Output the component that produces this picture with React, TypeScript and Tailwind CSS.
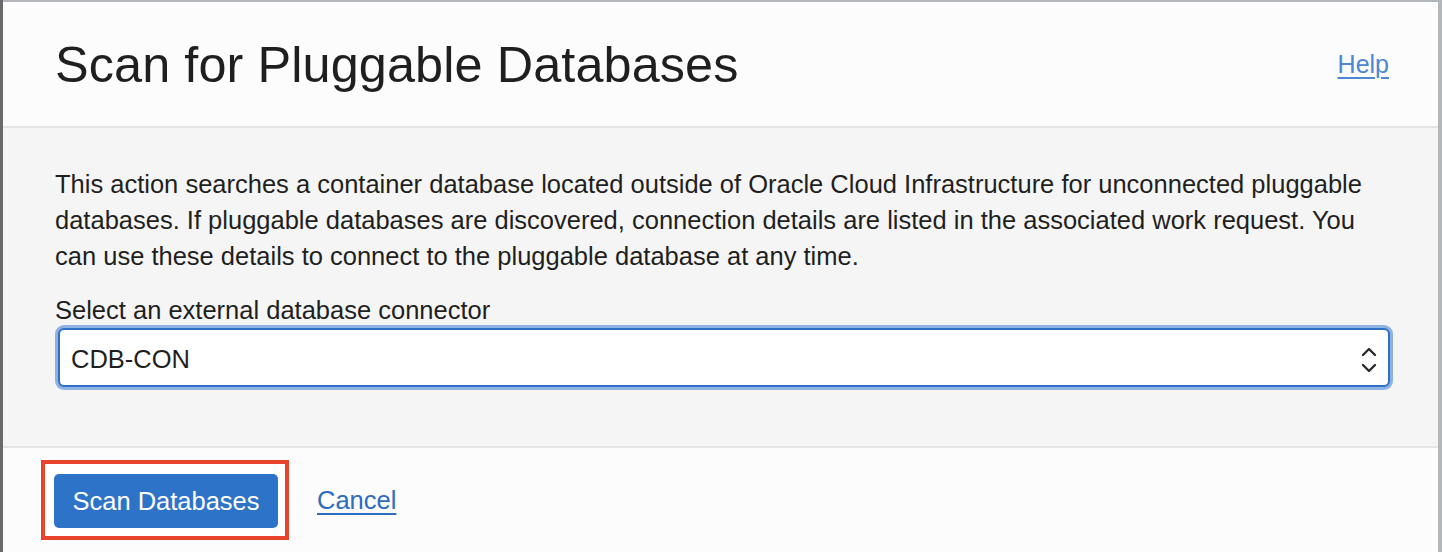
import React from 'react';

function SelectArrows() {
  return (
    <svg width="18" height="30" viewBox="0 0 18 30" fill="none" stroke="#2b2b2b" strokeWidth="2.4" strokeLinecap="round" strokeLinejoin="round">
      <path d="M3 10 L9 4 L15 10" />
      <path d="M3 20 L9 26 L15 20" />
    </svg>
  );
}

function App() {
  return (
    <div className="flex h-[552px] w-[1442px] overflow-hidden bg-[#b3b6ba] font-['Liberation_Sans',Arial,sans-serif] text-[#1f1f1f]">
      <div className="w-[3px] shrink-0 bg-[#6a6a6a]" />
      <div className="mt-[2px] mr-[4px] flex flex-1 flex-col bg-[#fcfcfc]">
        <header className="flex h-[126px] shrink-0 items-center justify-between border-b-2 border-[#e4e4e4] pl-[52px] pr-[49px] pt-[2px]">
          <h1 className="text-[50.4px] leading-none tracking-[0.1px] text-[#1f1f1f]">Scan for Pluggable Databases</h1>
          <a href="#" className="text-[25px] text-[#4d86d3] underline decoration-[2px] underline-offset-[4px]">Help</a>
        </header>

        <main className="flex h-[318px] shrink-0 flex-col bg-[#f5f5f5] pl-[52px] pr-[48px] pt-[38px]">
          <p className="pr-[12px] text-[25.5px] leading-[36px]">
            This action searches a container database located outside of Oracle Cloud Infrastructure for unconnected pluggable databases. If pluggable databases are discovered, connection details are listed in the associated work request. You can use these details to connect to the pluggable database at any time.
          </p>
          <label className="mt-[21px] text-[25.5px] leading-[30px]">Select an external database connector</label>
          <div className="mt-[3px] ml-[3px] flex h-[59px] items-center justify-between rounded-[6px] border-2 border-[#2f6fc6] bg-white pb-[1px] pl-[11px] pr-[10px] pt-[5px] shadow-[0_0_0_3px_#8fb2e4]">
            <span className="text-[25.5px]">CDB-CON</span>
            <SelectArrows />
          </div>
        </main>

        <footer className="flex-1 border-t-2 border-[#e4e4e4] bg-[#fcfcfc] pl-[38px] pt-[12px]">
          <div className="flex items-center">
            <div className="border-4 border-[#e8432c] bg-white pb-[8px] pl-[9px] pr-[7px] pt-[10px]">
              <button className="flex h-[54px] w-[224px] items-center justify-center rounded-[5px] bg-[#2d73c8] text-[25.5px] text-white">
                Scan Databases
              </button>
            </div>
            <a href="#" className="ml-[28px] text-[25.5px] text-[#2d6cc0] underline decoration-[2px] underline-offset-[4px]">Cancel</a>
          </div>
        </footer>
      </div>
    </div>
  );
}

export default App;
